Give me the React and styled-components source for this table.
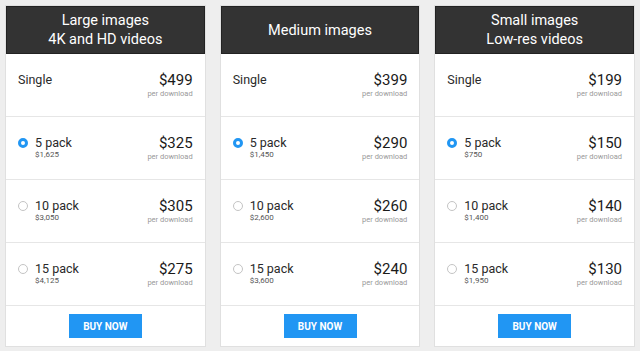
import React, { useState } from "react";
import styled, { createGlobalStyle } from "styled-components";

const GlobalStyle = createGlobalStyle`
  html, body {
    margin: 0;
    padding: 0;
    background: #eeeeee;
    font-family: Roboto, "Liberation Sans", Arial, sans-serif;
  }
`;

const plans = [
  {
    title: ["Large images", "4K and HD videos"],
    single: "$499",
    packs: [
      { name: "5 pack", total: "$1,625", price: "$325" },
      { name: "10 pack", total: "$3,050", price: "$305" },
      { name: "15 pack", total: "$4,125", price: "$275" },
    ],
  },
  {
    title: ["Medium images"],
    single: "$399",
    packs: [
      { name: "5 pack", total: "$1,450", price: "$290" },
      { name: "10 pack", total: "$2,600", price: "$260" },
      { name: "15 pack", total: "$3,600", price: "$240" },
    ],
  },
  {
    title: ["Small images", "Low-res videos"],
    single: "$199",
    packs: [
      { name: "5 pack", total: "$750", price: "$150" },
      { name: "10 pack", total: "$1,400", price: "$140" },
      { name: "15 pack", total: "$1,950", price: "$130" },
    ],
  },
];

const PriceCard = ({ plan }) => {
  const [selected, setSelected] = useState(0);
  return (
    <Card>
      <Header>
        {plan.title.map((line) => (
          <div key={line}>{line}</div>
        ))}
      </Header>
      <Row>
        <Left>
          <Label>Single</Label>
          <Sub />
        </Left>
        <Right>
          <Price>{plan.single}</Price>
          <Per>per download</Per>
        </Right>
      </Row>
      {plan.packs.map((p, i) => (
        <Row key={p.name} onClick={() => setSelected(i)}>
          <Left>
            <Label>
              <Radio $checked={selected === i} />
              {p.name}
            </Label>
            <Sub>{p.total}</Sub>
          </Left>
          <Right>
            <Price>{p.price}</Price>
            <Per>per download</Per>
          </Right>
        </Row>
      ))}
      <Footer>
        <BuyButton>BUY NOW</BuyButton>
      </Footer>
    </Card>
  );
};

const App = () => {
  return (
    <>
      <GlobalStyle />
      <Page>
        {plans.map((plan) => (
          <PriceCard key={plan.title[0]} plan={plan} />
        ))}
      </Page>
    </>
  );
};

export default App;

const Page = styled.div`
  display: flex;
  gap: 16px;
  padding: 6px;
`;

const Card = styled.div`
  width: 199px;
  background: #fff;
  box-shadow: 0 0 0 1px #e0e0e0;
  display: flex;
  flex-direction: column;
`;

const Header = styled.div`
  height: 48px;
  box-sizing: border-box;
  background: #333333;
  border: 1px solid #222;
  color: #fff;
  font-size: 14.5px;
  line-height: 19px;
  display: flex;
  flex-direction: column;
  align-items: center;
  justify-content: center;
`;

const Row = styled.div`
  height: 62px;
  border-bottom: 1px solid #e6e6e6;
  padding: 0 12px;
  display: flex;
  align-items: center;
  justify-content: space-between;
  cursor: pointer;
`;

const Left = styled.div`
  display: flex;
  flex-direction: column;
`;

const Label = styled.div`
  display: flex;
  align-items: center;
  gap: 7px;
  font-size: 12.5px;
  line-height: 14px;
  color: #2a2a2a;
`;

const Radio = styled.span`
  width: 10px;
  height: 10px;
  box-sizing: border-box;
  border-radius: 50%;
  border: ${(p) => (p.$checked ? "3px solid #2196f3" : "1px solid #c4c4c4")};
  background: #fff;
`;

const Sub = styled.div`
  height: 10px;
  font-size: 8px;
  line-height: 10px;
  color: #555;
  padding-left: 17px;
`;

const Right = styled.div`
  display: flex;
  flex-direction: column;
  align-items: flex-end;
`;

const Price = styled.div`
  font-size: 15px;
  line-height: 17px;
  color: #1a1a1a;
`;

const Per = styled.div`
  font-size: 7.5px;
  line-height: 9px;
  color: #999;
`;

const Footer = styled.div`
  height: 40px;
  display: flex;
  align-items: center;
  justify-content: center;
`;

const BuyButton = styled.button`
  width: 73px;
  height: 24px;
  border: none;
  background: #2196f3;
  color: #fff;
  font-family: inherit;
  font-size: 10px;
  font-weight: 700;
  cursor: pointer;
`;
